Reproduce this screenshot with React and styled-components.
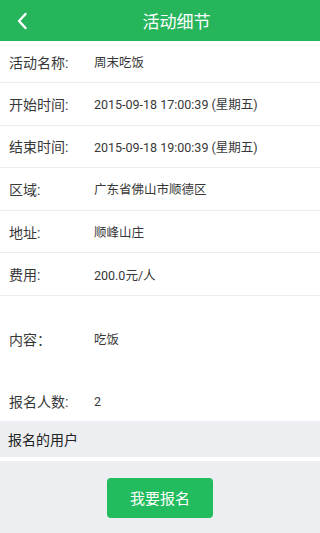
import React from "react";
import styled, { createGlobalStyle } from "styled-components";

const Global = createGlobalStyle`
  html, body { margin: 0; padding: 0; }
  body {
    font-family: Roboto, "Noto Sans CJK SC", sans-serif;
    background: #eceef1;
  }
`;

const Page = styled.div`
  width: 320px;
  height: 533px;
  display: flex;
  flex-direction: column;
  background: #eceef1;
  overflow: hidden;
`;

const Header = styled.header`
  height: 41px;
  background: #27b55c;
  display: flex;
  align-items: center;
  justify-content: center;
  padding-left: 33px;
  box-sizing: border-box;
  position: relative;
  color: #fff;
  font-size: 17px;
`;

const Back = styled.button`
  position: absolute;
  left: 12px;
  top: 11px;
  width: 20px;
  height: 20px;
  border: 0;
  padding: 0;
  background: transparent;
  display: flex;
  align-items: center;
  justify-content: center;
`;

const Card = styled.div`
  background: #fff;
  display: flex;
  flex-direction: column;
`;

const Row = styled.div`
  height: ${(p) => p.h || 42}px;
  display: flex;
  align-items: center;
  padding-left: 9px;
  border-bottom: ${(p) => (p.noLine ? "none" : "1.5px solid #ededed")};
  box-sizing: border-box;
`;

const Label = styled.span`
  width: 85px;
  font-size: 14px;
  color: #383838;
`;

const Value = styled.span`
  font-size: 12.5px;
  color: #383838;
`;

const Section = styled.div`
  height: 36px;
  background: #eceef1;
  display: flex;
  align-items: center;
  padding-left: 8px;
  font-size: 14px;
  color: #222;
`;

const Spacer = styled.div`
  height: 4px;
  background: #fff;
`;

const Footer = styled.div`
  flex: 1;
  display: flex;
  justify-content: center;
  padding-top: 17px;
`;

const Button = styled.button`
  width: 106px;
  height: 40px;
  border: 0;
  border-radius: 4px;
  background: #22bb5e;
  color: #fff;
  font-family: Roboto, "Noto Sans CJK SC", sans-serif;
  font-size: 15px;
`;

const rows = [
  ["活动名称:", "周末吃饭"],
  ["开始时间:", "2015-09-18 17:00:39 (星期五)"],
  ["结束时间:", "2015-09-18 19:00:39 (星期五)"],
  ["区域:", "广东省佛山市顺德区"],
  ["地址:", "顺峰山庄"],
  ["费用:", "200.0元/人"],
];

export default function App() {
  return (
    <Page>
      <Global />
      <Header>
        <Back aria-label="返回">
          <svg width="12" height="18" viewBox="0 0 12 18">
            <path d="M9.5 2 L3 9 L9.5 16" fill="none" stroke="#fff" strokeWidth="2.4" strokeLinecap="round" strokeLinejoin="round" />
          </svg>
        </Back>
        活动细节
      </Header>
      <Card>
        {rows.map(([l, v], i) => (
          <Row key={i} h={i === 0 ? 42 : 42.6}>
            <Label>{l}</Label>
            <Value>{v}</Value>
          </Row>
        ))}
        <Row h={86} noLine>
          <Label>内容：</Label>
          <Value>吃饭</Value>
        </Row>
        <Row h={39} noLine>
          <Label>报名人数:</Label>
          <Value>2</Value>
        </Row>
      </Card>
      <Section>报名的用户</Section>
      <Spacer />
      <Footer>
        <Button>我要报名</Button>
      </Footer>
    </Page>
  );
}
